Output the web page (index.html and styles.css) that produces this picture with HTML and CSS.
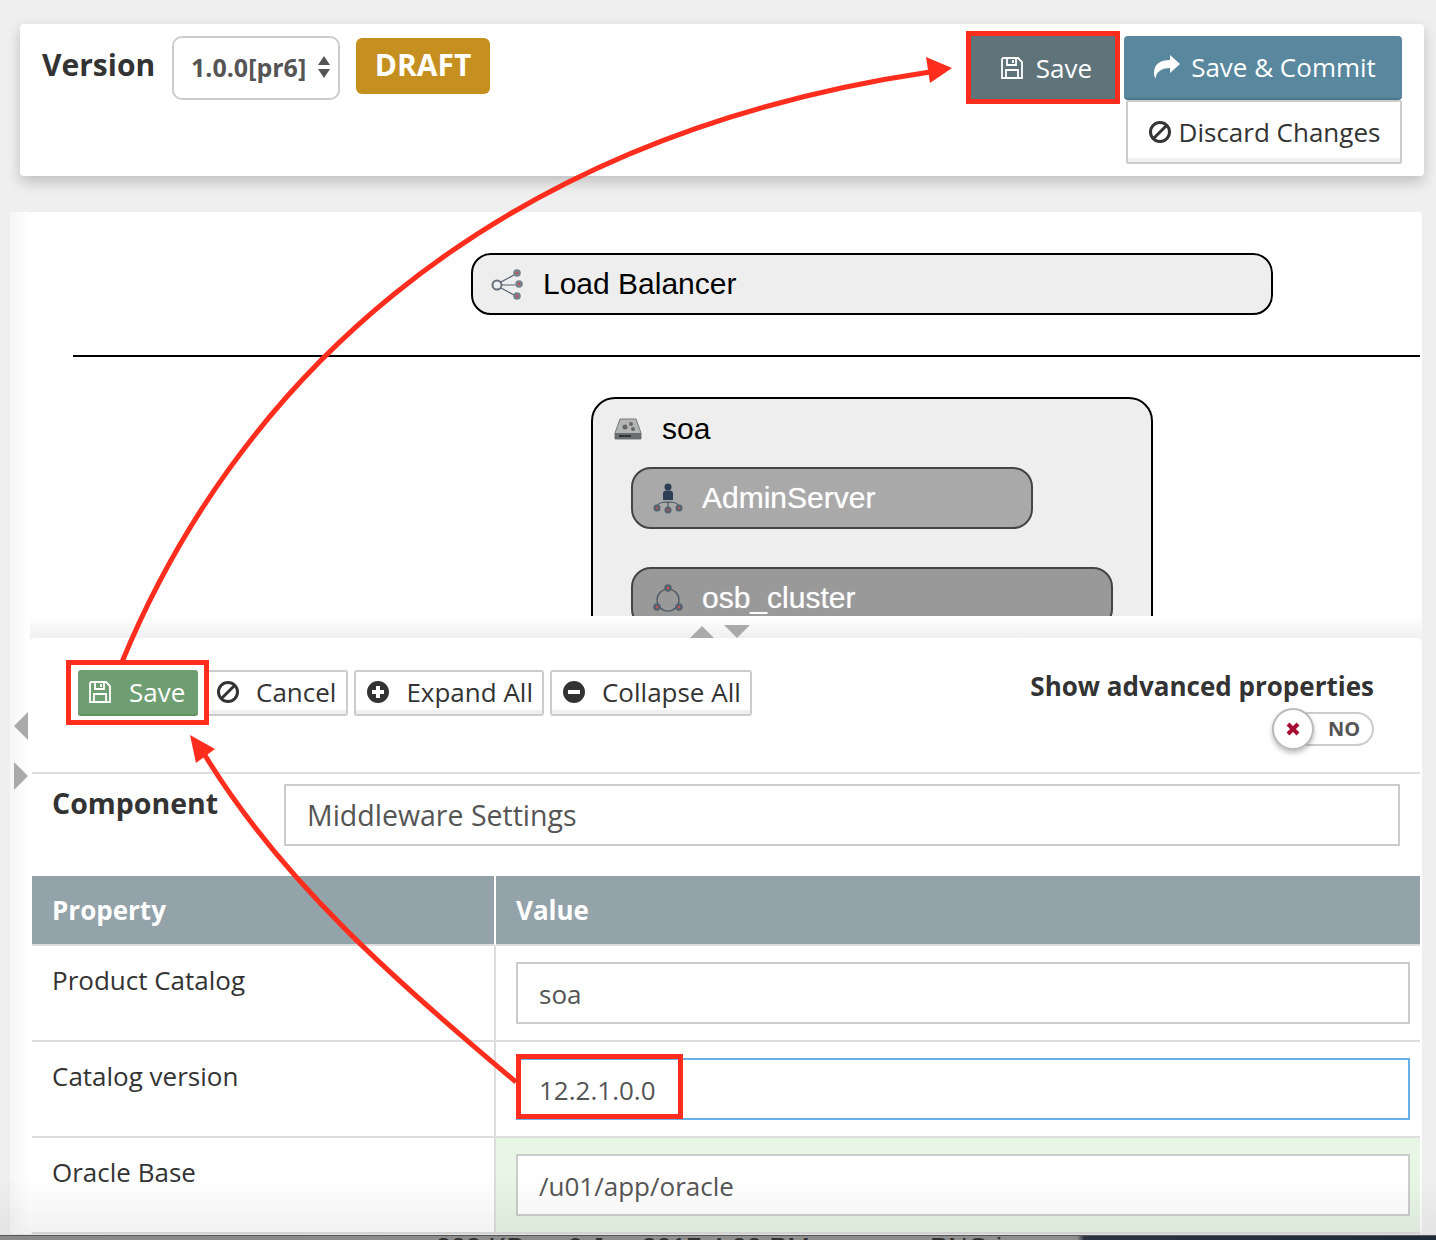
FILE: index.html
```html
<!DOCTYPE html>
<html lang="en">
  <head>
    <meta charset="UTF-8" />
    <title>Version editor</title>
    <link rel="stylesheet" href="styles.css">
  </head>
  <body>
    <div class="page">
      <div class="topbar">
        <div class="topbar-left">
          <span class="version-label">Version</span>
          <div class="version-select">
            <span>1.0.0[pr6]</span>
            <span class="select-arrows"><i class="arrow-up"></i><i class="arrow-down"></i></span>
          </div>
          <span class="draft-badge">DRAFT</span>
        </div>
        <div class="topbar-right">
          <div class="topbar-actions">
            <button class="btn-save-top">
              <svg class="icon-save" viewBox="0 0 24 24"><path d="M3 2h15l4 4v16H2V3z M7 2v7h9V2 M13 4v3 M6 22v-8h12v8"></path></svg>
              Save
            </button>
            <button class="btn-commit">
              <svg class="icon-share" viewBox="0 0 28 24"><path d="M27 9 17 0v5C7 5 1 9 1 18c0 2 .6 4 1.500 6C3 17 8 13 17 13v5z"></path></svg>
              Save &amp; Commit
            </button>
          </div>
          <button class="btn-discard">
            <svg class="icon-round" viewBox="0 0 24 24"><circle cx="12" cy="12" r="9.500"></circle><line x1="5.500" y1="18.500" x2="18.500" y2="5.500"></line></svg>
            Discard Changes
          </button>
        </div>
      </div>

      <div class="workspace">
        <div class="side-strip">
          <i class="handle-left"></i>
          <i class="handle-right"></i>
        </div>
        <div class="workspace-main">
          <div class="canvas">
            <div class="node node-lb">
              <svg class="node-icon" viewBox="0 0 32 32">
                <circle cx="6" cy="17" r="4.500" fill="none" stroke="#66727e" stroke-width="2"></circle>
                <path d="M10 14 23 7M11 17h13M10 20l13 7" stroke="#56616c" stroke-width="1.200" fill="none"></path>
                <circle cx="26" cy="5" r="3.800" fill="#77818c"></circle><circle cx="26" cy="5" r="1.200" fill="#d05058"></circle>
                <circle cx="28" cy="16" r="3.800" fill="#77818c"></circle><circle cx="28" cy="16" r="1.200" fill="#d05058"></circle>
                <circle cx="26" cy="28" r="3.800" fill="#77818c"></circle><circle cx="26" cy="28" r="1.200" fill="#d05058"></circle>
              </svg>
              <span>Load Balancer</span>
            </div>
            <div class="canvas-line"></div>
            <div class="node-domain">
              <div class="domain-title">
                <svg class="domain-icon" viewBox="0 0 28 24">
                  <path d="M6 2h16l5 14v6H1v-6z" fill="#b3b6b2" stroke="#77797a"></path>
                  <rect x="1" y="16" width="26" height="6" fill="#6a6c6e"></rect>
                  <rect x="5" y="18" width="12" height="2" fill="#2e3032"></rect>
                  <circle cx="11" cy="10" r="2.500" fill="#666"></circle><circle cx="17" cy="7" r="2" fill="#666"></circle><circle cx="19" cy="12" r="2" fill="#666"></circle>
                </svg>
                <span>soa</span>
              </div>
              <div class="server server-admin">
                <svg class="node-icon" viewBox="0 0 32 32">
                  <circle cx="16" cy="5" r="3.500" fill="#2c3e55"></circle>
                  <path d="M11 18v-7c0-2 2-2.500 5-2.500s5 .5 5 2.500v7z" fill="#2c3e55"></path>
                  <path d="M5 25c0-4 5-5 11-5s11 1 11 5M16 20v7" stroke="#4a5664" stroke-width="1.200" fill="none"></path>
                  <circle cx="5" cy="26" r="3.500" fill="#56616e"></circle><circle cx="5" cy="26" r="1" fill="#d05058"></circle>
                  <circle cx="16" cy="28" r="3.500" fill="#56616e"></circle><circle cx="16" cy="28" r="1" fill="#d05058"></circle>
                  <circle cx="27" cy="26" r="3.500" fill="#56616e"></circle><circle cx="27" cy="26" r="1" fill="#d05058"></circle>
                </svg>
                <span>AdminServer</span>
              </div>
              <div class="server server-cluster">
                <svg class="node-icon" viewBox="0 0 32 32">
                  <circle cx="16" cy="18" r="11" fill="none" stroke="#4a5664" stroke-width="1.200"></circle>
                  <circle cx="16" cy="6" r="3.800" fill="#56616e"></circle><circle cx="16" cy="6" r="1.200" fill="#d05058"></circle>
                  <circle cx="5" cy="25" r="3.800" fill="#56616e"></circle><circle cx="5" cy="25" r="1.200" fill="#d05058"></circle>
                  <circle cx="27" cy="25" r="3.800" fill="#56616e"></circle><circle cx="27" cy="25" r="1.200" fill="#d05058"></circle>
                </svg>
                <span>osb_cluster</span>
              </div>
            </div>
          </div>

          <div class="splitter">
            <i class="split-up"></i>
            <i class="split-down"></i>
          </div>

          <div class="panel">
            <div class="panel-toolbar">
              <div class="toolbar-buttons">
                <button class="btn-tool btn-green">
                  <svg class="icon-save" viewBox="0 0 24 24"><path d="M3 2h15l4 4v16H2V3z M7 2v7h9V2 M13 4v3 M6 22v-8h12v8"></path></svg>
                  Save
                </button>
                <button class="btn-tool btn-cancel">
                  <svg class="icon-round" viewBox="0 0 24 24"><circle cx="12" cy="12" r="9.500"></circle><line x1="5.500" y1="18.500" x2="18.500" y2="5.500"></line></svg>
                  Cancel
                </button>
                <button class="btn-tool">
                  <svg class="icon-solid" viewBox="0 0 24 24"><path fill-rule="evenodd" d="M12 1a11 11 0 1 0 0 22 11 11 0 0 0 0-22zM10 6h4v4h4v4h-4v4h-4v-4H6v-4h4z"></path></svg>
                  Expand All
                </button>
                <button class="btn-tool">
                  <svg class="icon-solid" viewBox="0 0 24 24"><path fill-rule="evenodd" d="M12 1a11 11 0 1 0 0 22 11 11 0 0 0 0-22zM6 10h12v4H6z"></path></svg>
                  Collapse All
                </button>
              </div>
              <div class="advanced">
                <span class="advanced-label">Show advanced properties</span>
                <div class="toggle">
                  <span class="toggle-text">NO</span>
                  <span class="toggle-knob">
                    <svg viewBox="0 0 16 16"><path d="M3 3l10 10M13 3 3 13"></path></svg>
                  </span>
                </div>
              </div>
            </div>

            <div class="component-row">
              <span class="component-label">Component</span>
              <div class="text-field component-field">Middleware Settings</div>
            </div>

            <table class="props-table">
              <thead>
                <tr>
                  <th class="col-prop">Property</th>
                  <th>Value</th>
                </tr>
              </thead>
              <tbody>
                <tr>
                  <td class="col-prop">Product Catalog</td>
                  <td class="value-cell"><div class="text-field">soa</div></td>
                </tr>
                <tr>
                  <td class="col-prop">Catalog version</td>
                  <td class="value-cell"><div class="text-field focused">12.2.1.0.0</div></td>
                </tr>
                <tr>
                  <td class="col-prop">Oracle Base</td>
                  <td class="value-cell changed"><div class="text-field">/u01/app/oracle</div></td>
                </tr>
              </tbody>
            </table>
          </div>
        </div>
      </div>

      <!-- window shadow + what shows through under the window edge -->
      <div class="window-shade"></div>
      <div class="desktop-edge">
        <span class="edge-size">808 KB</span>
        <span class="edge-date">9 Jan 2017 4:00 PM</span>
        <span class="edge-kind">PNG image</span>
      </div>

      <!-- red annotations drawn on top of the screenshot -->
      <svg class="annotations" viewBox="0 0 1436 1240">
        <rect x="968.500" y="33.500" width="149" height="68"></rect>
        <rect x="68.500" y="662.500" width="138" height="60"></rect>
        <rect x="518.500" y="1056.500" width="162" height="60"></rect>
        <path d="M122 662C230 400 470 140 930 72"></path>
        <path d="M516 1082C400 985 280 880 203 752"></path>
        <polygon points="952,68 926,57 930,83"></polygon>
        <polygon points="190,735 215,749 196,763"></polygon>
      </svg>
    </div>
  </body>
</html>
```

FILE: styles.css
```css
body {
  margin: 0;
  background-color: #efefef;
  font-family: "Open Sans", Arial, sans-serif;
  color: #333;
}
button {
  font-family: inherit;
  cursor: pointer;
}
.page {
  position: relative;
  height: 1240px;
  overflow: hidden;
  padding-top: 24px;
  box-sizing: border-box;
}

/* top bar */
.topbar {
  display: flex;
  justify-content: space-between;
  height: 152px;
  box-sizing: border-box;
  margin: 0 12px 0 20px;
  padding: 12px 22px 0 22px;
  background-color: #fff;
  border-radius: 4px;
  box-shadow: 0 6px 14px rgba(0, 0, 0, 0.2);
}
.topbar-left {
  display: flex;
  align-items: flex-start;
}
.version-label {
  width: 113px;
  margin-right: 17px;
  font-size: 30px;
  font-weight: 700;
  line-height: 58px;
  white-space: nowrap;
}
.version-select {
  display: flex;
  align-items: center;
  justify-content: space-between;
  width: 168px;
  height: 64px;
  box-sizing: border-box;
  padding: 0 8px 2px 17px;
  border: 2px solid #ccc;
  border-radius: 10px;
  font-size: 25px;
  font-weight: 700;
  color: #555;
}
.select-arrows {
  display: flex;
  flex-direction: column;
  gap: 4px;
}
.arrow-up {
  width: 0;
  border: 6px solid transparent;
  border-top: 0;
  border-bottom: 9px solid #555;
}
.arrow-down {
  width: 0;
  border: 6px solid transparent;
  border-bottom: 0;
  border-top: 9px solid #555;
}
.draft-badge {
  margin: 2px 0 0 16px;
  width: 134px;
  height: 56px;
  line-height: 54px;
  text-align: center;
  background-color: #c69020;
  border-radius: 6px;
  color: #fff;
  font-size: 30px;
  font-weight: 700;
}
.topbar-right {
  display: flex;
  flex-direction: column;
  align-items: flex-end;
}
.topbar-actions {
  display: flex;
  gap: 8px;
}
.btn-save-top,
.btn-commit {
  display: flex;
  align-items: center;
  justify-content: center;
  height: 64px;
  border: 0;
  color: #fff;
  font-size: 26px;
  padding: 0;
}
.btn-save-top {
  width: 146px;
  gap: 12px;
  padding-left: 6px;
  background-color: #5f737b;
}
.btn-commit {
  width: 278px;
  gap: 10px;
  padding-left: 3px;
  background-color: #58879e;
  border-radius: 4px;
  border-bottom: 2px solid #4c7589;
}
.btn-discard {
  display: flex;
  align-items: center;
  justify-content: center;
  gap: 7px;
  width: 276px;
  height: 64px;
  padding: 0;
  background-color: #fff;
  border: 2px solid #ccc;
  border-radius: 2px;
  box-shadow: inset 0 -4px 0 #f0f0f0;
  color: #333;
  font-size: 26px;
}
.icon-save {
  width: 24px;
  height: 24px;
  fill: none;
  stroke: #fff;
  stroke-width: 1.800;
}
.icon-share {
  width: 28px;
  height: 24px;
  fill: #fff;
}
.icon-round {
  width: 24px;
  height: 24px;
  fill: none;
  stroke: #333;
  stroke-width: 3;
}
.icon-solid {
  width: 24px;
  height: 24px;
  fill: #333;
}

/* workspace */
.workspace {
  display: flex;
  margin: 36px 14px 0 10px;
}
.side-strip {
  position: relative;
  width: 20px;
  background: linear-gradient(to right, #f6f6f6, #fff);
}
.handle-left {
  position: absolute;
  left: 4px;
  top: 500px;
  border: 14px solid transparent;
  border-left: 0;
  border-right-color: #aaa;
}
.handle-right {
  position: absolute;
  left: 4px;
  top: 550px;
  border: 14px solid transparent;
  border-right: 0;
  border-left-color: #aaa;
}
.workspace-main {
  flex: 1;
  min-width: 0;
}
.canvas {
  height: 404px;
  box-sizing: border-box;
  overflow: hidden;
  padding-top: 41px;
  background-color: #fff;
  border-radius: 4px 4px 0 0;
  color: #000;
  font-family: "Liberation Sans", Arial, sans-serif;
  font-size: 30px;
}
.node-icon {
  width: 32px;
  height: 32px;
  flex-shrink: 0;
}
.node {
  display: flex;
  align-items: center;
  gap: 20px;
  box-sizing: border-box;
  height: 62px;
  padding-left: 18px;
  border: 2px solid #000;
  border-radius: 20px;
  background-color: #eee;
}
.node-lb {
  width: 802px;
  margin-left: 441px;
}
.canvas-line {
  height: 2px;
  margin: 40px 2px 0 43px;
  background-color: #000;
}
.node-domain {
  width: 562px;
  height: 300px;
  box-sizing: border-box;
  margin: 40px 0 0 561px;
  padding: 0 0 0 38px;
  border: 2px solid #000;
  border-radius: 24px;
  background-color: #eee;
}
.domain-title {
  display: flex;
  align-items: center;
  gap: 20px;
  height: 60px;
  margin-left: -17px;
}
.domain-icon {
  width: 28px;
  height: 24px;
}
.server {
  display: flex;
  align-items: center;
  gap: 18px;
  box-sizing: border-box;
  height: 62px;
  padding-left: 19px;
  border: 2px solid #444;
  border-radius: 20px;
  color: #fff;
  text-shadow: 0 0 1px rgba(255, 255, 255, 0.6);
}
.server-admin {
  width: 402px;
  margin-top: 8px;
  background-color: #a9a9a9;
}
.server-cluster {
  width: 482px;
  margin-top: 38px;
  background-color: #999;
}
.splitter {
  display: flex;
  justify-content: center;
  align-items: flex-end;
  gap: 10px;
  height: 22px;
  padding-right: 12px;
  background: linear-gradient(#fff, #f0f0f0);
}
.split-up {
  border: 12px solid transparent;
  border-top: 0;
  border-bottom-color: #aaa;
}
.split-down {
  border: 13px solid transparent;
  border-bottom: 0;
  border-top-color: #aaa;
}

/* properties panel */
.panel {
  background-color: #fff;
  padding: 0 2px;
  border-radius: 4px;
}
.panel-toolbar {
  display: flex;
  justify-content: space-between;
  height: 136px;
  box-sizing: border-box;
  padding: 32px 46px 0 46px;
  border-bottom: 2px solid #ddd;
}
.toolbar-buttons {
  display: flex;
  align-items: flex-start;
  gap: 6px;
}
.btn-tool {
  display: flex;
  align-items: center;
  gap: 16px;
  height: 46px;
  padding: 0 9px 2px 10px;
  background-color: #fff;
  border: 2px solid #ccc;
  border-radius: 3px;
  box-shadow: inset 0 -4px 0 #f0f0f0;
  color: #333;
  font-size: 26px;
}
.btn-green {
  width: 120px;
  padding: 0 0 0 10px;
  margin-right: 1px;
  gap: 17px;
  background-color: #6f9e72;
  border: 0;
  border-bottom: 2px solid #62905f;
  box-shadow: none;
  color: #fff;
}
.btn-cancel {
  padding-left: 9px;
  padding-right: 10px;
}
.advanced {
  display: flex;
  flex-direction: column;
  align-items: flex-end;
}
.advanced-label {
  margin-top: -2px;
  font-size: 26px;
  font-weight: 700;
  line-height: 36px;
  color: #333;
}
.toggle {
  position: relative;
  width: 102px;
  height: 34px;
  box-sizing: border-box;
  margin-top: 8px;
  padding-left: 54px;
  border: 2px solid #ccc;
  border-radius: 17px;
  font-size: 20px;
  font-weight: 700;
  line-height: 30px;
  color: #555;
}
.toggle-knob {
  position: absolute;
  left: -2px;
  top: -6px;
  width: 42px;
  height: 42px;
  box-sizing: border-box;
  display: flex;
  align-items: center;
  justify-content: center;
  background-color: #fff;
  border: 2px solid #bbb;
  border-radius: 50%;
  box-shadow: 0 3px 5px rgba(0, 0, 0, 0.25);
}
.toggle-knob svg {
  width: 16px;
  height: 16px;
  fill: none;
  stroke: #a50d32;
  stroke-width: 4;
}
.component-row {
  display: flex;
  align-items: flex-start;
  padding: 10px 20px 30px 20px;
}
.component-label {
  width: 232px;
  font-size: 28.500px;
  font-weight: 700;
  line-height: 38px;
}
.text-field {
  height: 62px;
  box-sizing: border-box;
  padding-left: 21px;
  border: 2px solid #ccc;
  background-color: #fff;
  font-size: 26px;
  line-height: 60px;
  color: #555;
}
.component-field {
  flex: 1;
  font-size: 28.500px;
  line-height: 58px;
}
.props-table {
  width: 100%;
  border-collapse: separate;
  border-spacing: 0;
  table-layout: fixed;
}
.props-table th {
  height: 70px;
  box-sizing: border-box;
  padding: 0 20px;
  background-color: #94a3aa;
  color: #fff;
  font-size: 26px;
  font-weight: 700;
  text-align: left;
  border-bottom: 2px solid #ddd;
}
.props-table th.col-prop {
  border-right: 2px solid #fff;
}
.props-table td {
  height: 96px;
  box-sizing: border-box;
  padding: 0;
  border-bottom: 2px solid #ddd;
  vertical-align: top;
  font-size: 26px;
}
.props-table .col-prop {
  width: 464px;
  box-sizing: border-box;
}
.props-table td.col-prop {
  padding: 15px 20px 0 20px;
  border-right: 2px solid #ddd;
  line-height: 38px;
}
.props-table td.value-cell {
  padding: 16px 10px 0 20px;
}
.props-table td.changed {
  background-color: #e8f6e6;
}
.text-field.focused {
  border-color: #6ab0e8;
}

/* window edge + shadow */
.window-shade {
  position: absolute;
  left: 0;
  right: 0;
  bottom: 5px;
  height: 60px;
  background: linear-gradient(transparent, rgba(0, 0, 0, 0.05));
  pointer-events: none;
}
.desktop-edge {
  position: absolute;
  left: 0;
  right: 0;
  bottom: 0;
  height: 5px;
  overflow: hidden;
  background: linear-gradient(to right, #8a8a8a 0, #8f8f8f 75%, #2b3442 75.500%, #1f2a38 100%);
  border-top: 1px solid #555;
  box-sizing: border-box;
  font-family: "Liberation Sans", Arial, sans-serif;
  font-size: 27px;
  line-height: 30px;
  color: #333;
}
.edge-size,
.edge-date,
.edge-kind {
  position: absolute;
  top: -3px;
  white-space: nowrap;
}
.edge-size {
  left: 436px;
}
.edge-date {
  left: 568px;
}
.edge-kind {
  left: 930px;
}
.annotations {
  position: absolute;
  left: 0;
  top: 0;
  width: 1436px;
  height: 1240px;
  pointer-events: none;
}
.annotations rect,
.annotations path {
  fill: none;
  stroke: #ff2d1e;
  stroke-width: 5;
}
.annotations polygon {
  fill: #ff2d1e;
}
```
